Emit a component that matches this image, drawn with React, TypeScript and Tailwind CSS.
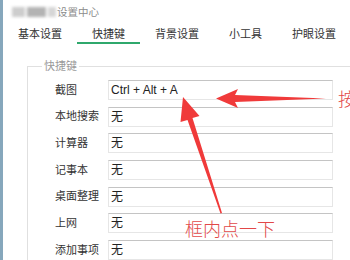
import React from 'react'

const tabs = ['基本设置', '快捷键', '背景设置', '小工具', '护眼设置']

const rows: [string, string][] = [
  ['截图', 'Ctrl + Alt + A'],
  ['本地搜索', '无'],
  ['计算器', '无'],
  ['记事本', '无'],
  ['桌面整理', '无'],
  ['上网', '无'],
  ['添加事项', '无'],
]

const font = "font-['Liberation_Sans','Noto_Sans_CJK_SC',sans-serif]"

export default function App() {
  return (
    <div className={`relative w-[350px] h-[260px] overflow-hidden bg-white flex ${font}`}>
      <div className="w-[3px] shrink-0 bg-[#86a7bc]" />

      <div className="flex-1 flex flex-col">
        {/* title */}
        <div className="h-[28px] flex items-center pl-[9px]">
          <div className="w-[44px] h-[10px] mr-[1px] flex gap-[2px] blur-[1.5px]">
            <div className="w-[13px] bg-[#cdcdcd]" />
            <div className="w-[19px] bg-[#b3b3b3]" />
            <div className="w-[8px] bg-[#d6d6d6]" />
          </div>
          <span className="text-[10.5px] leading-none text-[#8c8c8c]">设置中心</span>
        </div>

        {/* tabs */}
        <div className="flex h-[24px]">
          {tabs.map((t, i) => (
            <div
              key={t}
              className={
                'px-[15px] pt-[3px] text-[11px] leading-[14px] text-[#333] border-b-2 ' +
                (i === 1 ? 'border-[#2fa86c]' : 'border-transparent')
              }
            >
              {t}
            </div>
          ))}
        </div>

        {/* group box */}
        <div className="relative mt-[22px] ml-[24px] w-[400px] flex-1 border-l border-t border-[#e0e0e0]">
          <div className="absolute -top-[8px] left-[14px] bg-white px-[2px] text-[11px] leading-[14px] text-[#9a9a9a]">
            快捷键
          </div>
          <div className="pt-[13px] pl-[27px] flex flex-col gap-[6.67px]">
            {rows.map(([label, value]) => (
              <div key={label} className="flex items-center h-[20px]">
                <div className="w-[53px] text-[11px] text-[#333]">{label}</div>
                <div className="w-[225px] h-[20px] border border-[#e6e6e6] border-t-[#c4c4c4] flex items-center pl-[2px] text-[12px] text-[#222]">
                  {value}
                </div>
              </div>
            ))}
          </div>
        </div>
      </div>

      {/* annotations */}
      <svg className="absolute inset-0 pointer-events-none" width="350" height="260" viewBox="0 0 350 260">
        <polygon
          points="216,98.5 238,89 235,95 326,98.5 235,102 238,108"
          fill="#f03a3a"
        />
        <polygon
          points="183,97 199.5,116 192.5,118 222,213 220.5,213.5 187.5,120 180.5,122"
          fill="#f03a3a"
        />
      </svg>
      <div className="absolute left-[338px] top-[88px] text-[18px] leading-[20px] text-[#e24848] font-['Noto_Sans_CJK_SC',sans-serif] font-light">
        按
      </div>
      <div className="absolute left-[185px] top-[217px] text-[18px] leading-[22px] text-[#e24848] font-['Noto_Sans_CJK_SC',sans-serif] font-light">
        框内点一下
      </div>
    </div>
  )
}
